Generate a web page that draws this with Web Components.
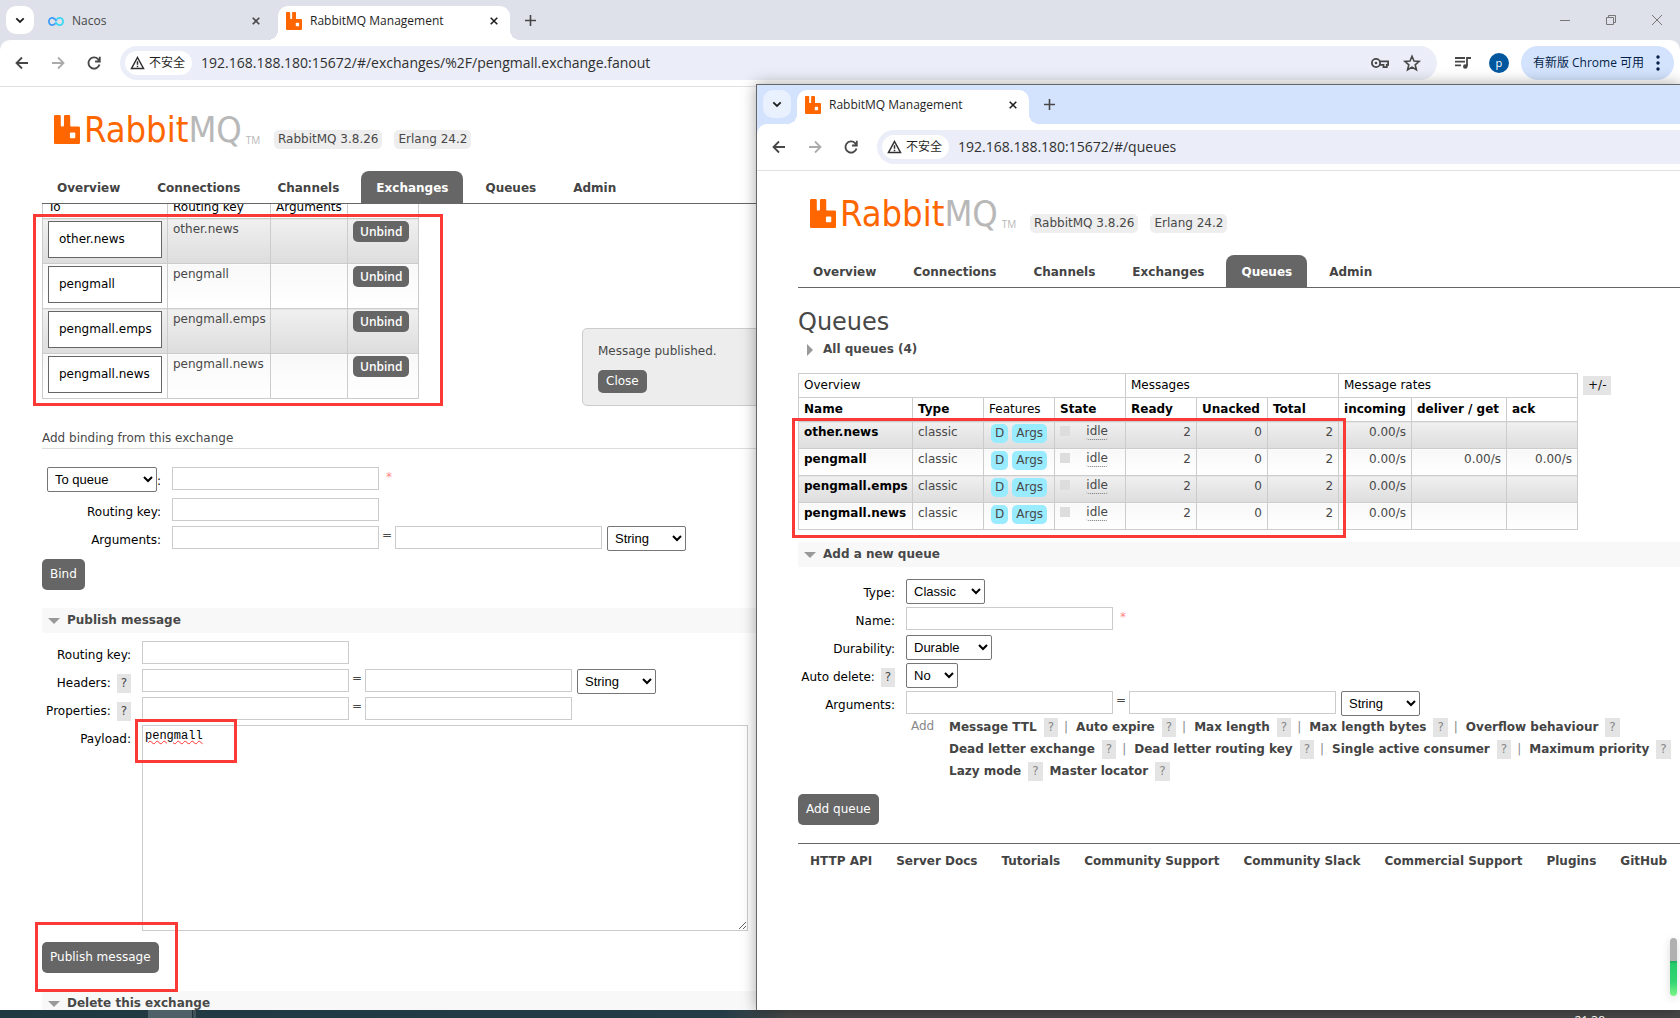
<!DOCTYPE html>
<html lang="zh-CN">
<head>
<meta charset="utf-8">
<title>RabbitMQ Management</title>
<style>
html, body { margin: 0; height: 100%; overflow: hidden; }
body { font: 12px/19px "DejaVu Sans", Verdana, sans-serif; color: #484848; background: #fff; }
</style>
</head>
<body>
<desktop-screen>
  <browser-window class="main" address="192.168.188.180:15672/#/exchanges/%2F/pengmall.exchange.fanout" actions>
    <browser-tab slot="tabs" icon="nacos">Nacos</browser-tab>
    <browser-tab slot="tabs" icon="rabbit" active>RabbitMQ Management</browser-tab>
    <rabbit-page current="Exchanges"><exchange-view></exchange-view></rabbit-page>
  </browser-window>
  <browser-window slot="front" class="front" framed address="192.168.188.180:15672/#/queues">
    <browser-tab slot="tabs" icon="rabbit" active>RabbitMQ Management</browser-tab>
    <rabbit-page current="Queues"><queues-view></queues-view></rabbit-page>
  </browser-window>
  <mark-box slot="marks" style="left:33px;top:214px;width:410px;height:192px"></mark-box>
  <mark-box slot="marks" style="left:135px;top:719px;width:102px;height:44px"></mark-box>
  <mark-box slot="marks" style="left:35px;top:922px;width:143px;height:70px"></mark-box>
  <mark-box slot="marks" style="left:792px;top:418px;width:554px;height:120px"></mark-box>
</desktop-screen>
<script>
const base = `
:host, *, *::before, *::after { box-sizing: border-box; }
:host { display: block; }
a { color: inherit; text-decoration: none; }
button { font: inherit; border: 0; padding: 0; background: none; color: inherit; }
svg { display: block; }
table { border-collapse: collapse; }
th { font-weight: normal; text-align: left; color: #000; }
th, td { border: 1px solid #ccc; }
tbody tr:nth-child(odd) td { background: linear-gradient(#f0f0f0, #ddd); }
tbody tr:nth-child(even) td { background: linear-gradient(#f8f8f8, #fff); }
.btn { background: #666; color: #fff; border-radius: 5px; padding: 6px 8px; display: block; }
.help { background: #e4e4e4; display: inline-block; padding: 0 4px; color: #484848; }
`;
function define(name, css, html) {
  customElements.define(name, class extends HTMLElement {
    constructor() {
      super();
      this.attachShadow({ mode: 'open' });
    }
    connectedCallback() {
      const t = document.createElement('template');
      t.innerHTML = `<style>${base}${css}</style>` + (typeof html === 'function' ? html(this) : html);
      this.shadowRoot.replaceChildren(t.content.cloneNode(true));
    }
  });
}

const rabbit = `<path fill="#ff6600" d="M0 1.2Q0 0 1.2 0h4.2q1.2 0 1.2 1.2v9q0 .9.9.9h1.3q.9 0 .9-.9v-9Q9.700 0 10.900 0h3.700q1.200 0 1.200 1.200v9q0 .9.9.9H24q1.300 0 1.300 1.300V27q0 1.300-1.300 1.300H1.300Q0 28.300 0 27z"/><rect x="15.500" y="17" width="5.200" height="5.600" rx="1" fill="#fff"/>`;

define('rabbit-mark', `:host { width: var(--mark-width, 16px); flex: none; } svg { width: 100%; }`,
  `<svg viewBox="0 0 25.300 28.300" aria-hidden="true">${rabbit}</svg>`);

define('nacos-mark', `:host { width: 16px; flex: none; }`,
  `<svg width="16" height="11" viewBox="0 0 18 12" fill="none" stroke-width="2" aria-hidden="true">
    <path stroke="#3b9bf8" d="M9.500 5.500C8 3 7 2 5 2a4 4 0 0 0 0 8c1.500 0 2.500-.6 3.500-2"/>
    <path stroke="#38d8f5" d="M8.500 6.500C10 9 11 10 13 10a4 4 0 0 0 0-8c-1.500 0-2.500.6-3.500 2"/></svg>`);

define('browser-tab', `
:host { flex: none; width: 232px; height: 34px; position: relative; color: #474747; font: 12px/30px "Open Sans", "Noto Sans", sans-serif; }
:host([active]) { background: #fff; color: #1f1f1f; border-radius: 10px 10px 0 0; }
:host([active])::before, :host([active])::after { content: ""; position: absolute; bottom: 0; width: 10px; height: 10px; }
:host([active])::before { left: -10px; background: radial-gradient(circle at 0 0, transparent 10px, #fff 10px); }
:host([active])::after { right: -10px; background: radial-gradient(circle at 100% 0, transparent 10px, #fff 10px); }
.in { display: flex; align-items: center; gap: 8px; padding: 0 12px 0 8px; height: 30px; }
.t { flex: 1; white-space: nowrap; }
`, el => `<div class="in"><${el.getAttribute('icon')}-mark></${el.getAttribute('icon')}-mark><span class="t"><slot></slot></span>
<button aria-label="关闭"><svg width="8" height="8" viewBox="0 0 9 9" stroke="currentColor" stroke-width="1.800"><path d="M.8.8l7.400 7.400M8.200.8L.8 8.200"/></svg></button></div>`);

define('browser-window', `
:host { display: flex; flex-direction: column; overflow: hidden; background: #fff; font-family: "Open Sans", "Noto Sans CJK SC", sans-serif; color: #474747; --strip: #dee1e9; --picker: #fff; --page-pad: 42px; }
:host([framed]) { --strip: #d3e3fd; --picker: #e9f1fe; --page-pad: 41px; }
.strip { flex: none; height: 40px; background: var(--strip); display: flex; align-items: flex-start; padding: 6px 0 0 6px; }
:host([framed]) .strip { height: 39px; padding-top: 5px; }
.picker { width: 28px; height: 28px; border-radius: 10px; background: var(--picker); display: grid; place-items: center; color: #1f1f1f; }
.tabs { display: flex; gap: 6px; padding-left: 6px; }
.new { width: 40px; height: 28px; display: grid; place-items: center; }
.ctl { margin-left: auto; display: flex; height: 28px; align-items: center; gap: 36px; padding-right: 18px; color: #777; }
.bar { flex: none; height: 46px; background: #fff; display: flex; align-items: center; padding: 0 6px 0 12px; border-radius: 10px 10px 0 0; }
.back { background: var(--strip); flex: none; border-bottom: 1px solid #dfe1e5; }
.nav { display: flex; gap: 16px; padding-right: 16px; }
.nav button { width: 20px; height: 20px; }
.box { flex: 1; height: 34px; border-radius: 17px; background: #ebeef8; display: flex; align-items: center; padding: 0 15px 0 5px; }
.chip { height: 24px; border-radius: 12px; background: #fff; display: flex; align-items: center; gap: 4px; padding: 0 7px 0 5px; font-size: 12px; line-height: 24px; color: #1f1f1f; white-space: nowrap; }
input { flex: 1; min-width: 0; border: 0; outline: 0; background: none; font: 14px/20px "Open Sans", sans-serif; color: #303030; padding: 0; margin: 0 0 0 9px; }
.icons { display: flex; gap: 12px; }
.right { display: flex; align-items: center; padding-left: 16px; }
.avatar { width: 20px; height: 20px; border-radius: 10px; background: #00579e; color: #fff; font-size: 11px; line-height: 20px; margin: 0 12px 0 16px; }
.update { height: 34px; border-radius: 17px; background: #d3e3fd; color: #041e49; font: 12px/34px "Open Sans", "Noto Sans CJK SC", sans-serif; padding: 0 14px 0 12px; display: flex; gap: 12px; align-items: center; white-space: nowrap; }
:host([framed]) .bar { padding-right: 0; border-top-right-radius: 0; }
:host([framed]) .box { border-radius: 17px 0 0 17px; }
.page { flex: 1; min-height: 0; overflow: hidden; }
`, el => `
<div class="strip">
  <button class="picker" aria-label="搜索标签页"><svg width="10" height="7" viewBox="0 0 10 7" fill="none" stroke="currentColor" stroke-width="1.800"><path d="M1.300 1.300L5 5l3.700-3.700"/></svg></button>
  <div class="tabs"><slot name="tabs"></slot></div>
  <button class="new" aria-label="新标签页"><svg width="11" height="11" viewBox="0 0 11 11" stroke="currentColor" stroke-width="1.600"><path d="M5.500 0v11M0 5.500h11"/></svg></button>
  ${el.hasAttribute('actions') ? `<div class="ctl">
    <svg width="10" height="10" stroke="currentColor"><path d="M0 5.500h10"/></svg>
    <svg width="10" height="10" fill="none" stroke="currentColor"><path d="M.5 2.500h7v7h-7zM2.500 2.500v-2h7v7h-2"/></svg>
    <svg width="10" height="10" stroke="currentColor"><path d="M0 0l10 10M10 0L0 10"/></svg></div>` : ''}
</div>
<div class="back"><div class="bar">
  <div class="nav">
    <button aria-label="返回"><svg width="20" height="20" fill="none" stroke="#474747" stroke-width="1.800"><path d="M16 10H5M10 4.500L4.500 10l5.500 5.500"/></svg></button>
    <button aria-label="前进"><svg width="20" height="20" fill="none" stroke="#ababab" stroke-width="1.800"><path d="M4 10h11M10 4.500l5.500 5.500-5.500 5.500"/></svg></button>
    <button aria-label="重新加载"><svg width="20" height="20" fill="none" stroke="#474747" stroke-width="1.800"><path d="M15.500 11.500a5.600 5.600 0 1 1-1.400-5.400L15.500 8M15.800 3.800v4.700h-4.700"/></svg></button>
  </div>
  <div class="box">
    <span class="chip"><svg width="15" height="14" viewBox="0 0 15 14" fill="none" stroke="#303030" stroke-width="1.500"><path d="M7.500 1.500l6 11h-12z"/><path d="M7.500 5.200v3.600M7.500 9.800v1.500"/></svg>不安全</span>
    <input aria-label="地址" value="${el.getAttribute('address')}">
    ${el.hasAttribute('actions') ? `<span class="icons">
      <svg width="20" height="20" fill="none" stroke="#474747" stroke-width="1.800"><circle cx="6" cy="10" r="4.100"/><circle cx="6" cy="10" r="1.300" fill="#474747" stroke="none"/><path d="M9.800 8.300h8.300v3.500h-1.300v2.300h-3.300v-2.300H9.800"/></svg>
      <svg width="20" height="20" fill="none" stroke="#474747" stroke-width="1.600"><path d="M10 3.300l2 4.700 5.100.4-3.900 3.400 1.200 5-4.400-2.700-4.400 2.700 1.200-5L2.900 8.400 8 8z"/></svg></span>` : ''}
  </div>
  ${el.hasAttribute('actions') ? `<div class="right">
    <svg width="20" height="20" fill="none" stroke="#474747" stroke-width="1.800"><path d="M2 5h10M2 8.700h10M2 12.400h6M14 13V5h4"/><circle cx="12.300" cy="13.500" r="2.300" fill="#474747" stroke="none"/></svg>
    <button class="avatar">p</button>
    <button class="update">有新版 Chrome 可用<svg width="4" height="16" fill="#041e49"><circle cx="2" cy="2" r="1.700"/><circle cx="2" cy="8" r="1.700"/><circle cx="2" cy="14" r="1.700"/></svg></button></div>` : ''}
</div></div>
<div class="page"><slot></slot></div>`);

define('rabbit-logo', `
:host { display: flex; align-items: flex-end; --mark-width: 26px; }
.w { font: 36px/30px "DejaVu Sans Condensed", "Liberation Sans Narrow", sans-serif; color: #f60; margin-left: 4px; height: 29px; }
.w b { font-weight: normal; color: #b8b8b8; }
.tm { font: 10px/10px "Open Sans", sans-serif; color: #b8b8b8; margin-left: 4px; height: 9px; }
`, `<rabbit-mark></rabbit-mark><span class="w">Rabbit<b>MQ</b></span><span class="tm">TM</span>`);

define('rabbit-page', `
:host { display: flex; flex-direction: column; height: 100%; padding-left: var(--page-pad); font: 12px/19px "DejaVu Sans", Verdana, sans-serif; color: #484848; }
.head { flex: none; display: flex; padding: 28px 0 21px 12px; align-items: flex-start; height: 84px; }
rabbit-logo { width: 204px; height: 29px; }
.v { margin-top: 15px; margin-left: 12px; background: #eee; border-radius: 5px; padding: 0 4px; }
.v:first-of-type { margin-left: 16px; }
nav { flex: none; display: flex; gap: 7px; border-bottom: 1px solid #666; height: 33px; }
nav a { font-weight: bold; padding: 0 15px; line-height: 34px; height: 32px; border-radius: 8px 8px 0 0; color: #444; }
nav a.on { background: #666; color: #fff; }
.body { flex: 1; min-height: 0; overflow: hidden; }
`, el => `<div class="head"><rabbit-logo></rabbit-logo><span class="v">RabbitMQ 3.8.26</span><span class="v">Erlang 24.2</span></div>
<nav>${['Overview','Connections','Channels','Exchanges','Queues','Admin'].map(n => `<a href="#"${n === el.getAttribute('current') ? ' class="on"' : ''}>${n}</a>`).join('')}</nav>
<div class="body"><slot></slot></div>`);

define('section-title', `
:host { height: 25px; background: #f8f8f8; }
:host([closed]) { background: none; }
button { display: flex; align-items: center; font-weight: bold; line-height: 25px; }
i { width: 24px; height: 25px; margin-right: 1px; display: grid; place-items: center; }
i::before { content: ""; display: block; width: 0; height: 0; border: 6px solid transparent; border-bottom: 0; border-top-color: #999; }
:host([closed]) i::before { border: 6px solid transparent; border-right: 0; border-left-color: #999; }
`, `<button><i></i><slot></slot></button>`);

/* One labelled line of a form: kind is text, pair, select or area. */
define('form-line', `
:host { display: flex; align-items: flex-start; height: 28px; font: inherit; }
:host([kind="area"]) { height: auto; }
.l { width: var(--label, 89px); text-align: right; color: #000; line-height: 28px; white-space: nowrap; margin-right: 11px; }
.l .help { line-height: 19px; margin-left: 2px; }
input, textarea { border: 1px solid #ccc; margin: 0; padding: 2px; outline: 0; background: #fff; }
input { width: 207px; height: 23px; }
textarea { width: 606px; height: 206px; font: 12px/16px "Liberation Mono", monospace; color: #000; text-decoration: underline wavy #f33 1px; }
select { height: 25px; font: 13px "Liberation Sans", Arial, sans-serif; background: #fff; border: 1px solid #767676; border-radius: 2px; padding: 0 3px; margin: 0; color: #000; }
.l select { vertical-align: top; }
.eq { width: 16px; text-align: center; }
.pick { margin-left: 5px; width: 79px; }
.req { color: #f88; margin-left: 7px; line-height: 20px; }
`, el => {
  const kind = el.getAttribute('kind') || 'text', label = el.getAttribute('label'), opt = el.getAttribute('option');
  const sel = (cls = '', w = '') => `<select id="${kind === 'select' ? 'f' : 's'}" aria-label="${opt}" class="${cls}"${w ? ` style="width:${w}px"` : ''}><option>${opt}</option></select>`;
  const help = el.hasAttribute('help') ? ' <span class="help">?</span>' : '';
  const lab = label ? `<label class="l" for="f">${label}:${help}</label>` : `<label class="l" for="f">${sel('', 110)}:</label>`;
  let f = '<input id="f">';
  if (kind === 'pair') f += `<span class="eq">=</span><input aria-label="value">${opt ? sel('pick') : ''}`;
  if (kind === 'select') f = sel('', el.getAttribute('width'));
  if (kind === 'area') f = `<textarea id="f">${el.getAttribute('value')}</textarea>`;
  return lab + f + (el.hasAttribute('required') ? '<span class="req">*</span>' : '');
});

define('exchange-view', `
:host { position: relative; height: 100%; }
.bind { margin-top: -10px; table-layout: fixed; width: 377px; }
.bind th { height: 24px; padding: 2px 5px 0; }
.bind td { height: 45px; padding: 2px 5px 0; vertical-align: top; line-height: 17px; }
.ex { display: block; border: 1px solid #666; background: #fff; color: #000; line-height: 35px; padding: 0 10px; }
.bind .btn { padding: 1px 7px; font: 600 12px/19px "Open Sans", sans-serif; }
.sub { margin: 29px 0 18px; border-bottom: 1px solid #ddd; line-height: 20px; }
.first { --label: 119px; }
.first :first-child { margin-bottom: 3px; }
.first .btn { margin: 5px 0 18px; }
.pub { padding-top: 8px; }
.pub .btn { margin: 11px 0 18px; }
.note { position: absolute; left: 540px; top: 124px; width: 340px; height: 78px; border: 1px solid #ccc; border-radius: 5px; background: #ededed; padding: 13px 15px; display: flex; flex-direction: column; align-items: flex-start; gap: 9px; }
.note .btn { padding: 2px 8px; }
.pane { display: flow-root; }
`, () => `
<div class="pane">
<table class="bind"><colgroup><col style="width:125px"><col style="width:103px"><col style="width:77px"><col style="width:71px"></colgroup><thead><tr><th>To</th><th>Routing key</th><th>Arguments</th><th></th></tr></thead><tbody>
${['other.news','pengmall','pengmall.emps','pengmall.news'].map(q => `<tr><td><a class="ex" href="#">${q}</a></td><td>${q}</td><td></td><td><button class="btn">Unbind</button></td></tr>`).join('')}
</tbody></table>
<div class="sub">Add binding from this exchange</div>
<div class="first">
  <form-line option="To queue" required></form-line>
  <form-line label="Routing key"></form-line>
  <form-line label="Arguments" kind="pair" option="String"></form-line>
  <button class="btn">Bind</button>
</div>
<section-title>Publish message</section-title>
<div class="pub">
  <form-line label="Routing key"></form-line>
  <form-line label="Headers" help kind="pair" option="String"></form-line>
  <form-line label="Properties" help kind="pair"></form-line>
  <form-line label="Payload" kind="area" value="pengmall"></form-line>
  <button class="btn">Publish message</button>
</div>
<section-title>Delete this exchange</section-title>
</div>
<div class="note"><span>Message published.</span><button class="btn">Close</button></div>`);

const queueRows = [['other.news', '', ''], ['pengmall', '0.00/s', '0.00/s'], ['pengmall.emps', '', ''], ['pengmall.news', '', '']];
define('queue-table', `
:host { display: flex; align-items: flex-start; gap: 5px; }
table { table-layout: fixed; width: 780px; }
th { height: 24px; padding: 0 5px; }
td { height: 27px; padding: 1px 5px 0; vertical-align: top; }
th b, td b { color: #000; }
.r { text-align: right; }
.tag { background: #99ebff; border-radius: 5px; padding: 0 4px; margin-left: 3px; display: inline-block; }
.tag + .tag { margin-left: 4px; }
.f { padding: 2px 3px 0 4px; white-space: nowrap; }
.st { display: flex; justify-content: space-between; align-items: center; padding-right: 12px; }
.st i { width: 10px; height: 10px; background: #ddd; margin-bottom: 1px; }
.st abbr { border-bottom: 1px dotted #777; border-radius: 3px; line-height: 17px; height: 17px; text-decoration: none; }
.cols { background: #e4e4e4; color: #111; padding: 0 5px; margin-top: 3px; }
`, () => `<table><colgroup><col style="width:114px"><col style="width:71px"><col style="width:71px"><col style="width:71px"><col style="width:71px"><col style="width:71px"><col style="width:71px"><col style="width:73px"><col style="width:95px"><col style="width:71px"></colgroup>
<thead><tr><th colspan="4">Overview</th><th colspan="3">Messages</th><th colspan="3">Message rates</th></tr>
<tr><th><b>Name</b></th><th><b>Type</b></th><th>Features</th><th><b>State</b></th><th><b>Ready</b></th><th><b>Unacked</b></th><th><b>Total</b></th><th><b>incoming</b></th><th><b>deliver / get</b></th><th><b>ack</b></th></tr></thead>
<tbody>${queueRows.map(([n, d, a]) => `<tr><td><a href="#"><b>${n}</b></a></td><td>classic</td><td class="f"><span class="tag">D</span><span class="tag">Args</span></td><td><div class="st"><i></i><abbr>idle</abbr></div></td><td class="r">2</td><td class="r">0</td><td class="r">2</td><td class="r">0.00/s</td><td class="r">${d}</td><td class="r">${a}</td></tr>`).join('')}</tbody></table>
<button class="cols">+/-</button>`);

define('argument-links', `
:host { display: flex; color: #888; padding-left: 113px; }
.add { width: 38px; line-height: 16px; }
.rows { display: flex; flex-direction: column; gap: 3px; }
.rows div { display: flex; gap: 7px; white-space: nowrap; }
a { font-weight: bold; color: #444; }
.help { color: #888; }
.bar { margin: 0 1px 0 -1px; }
`, () => {
  const row = (list, sep) => `<div>${list.map(t => `<a href="#">${t}</a><span class="help">?</span>`).join(sep)}</div>`;
  const bar = '<span class="bar">|</span>';
  return `<span class="add">Add</span><div class="rows">${row(['Message TTL','Auto expire','Max length','Max length bytes','Overflow behaviour'], bar)}
${row(['Dead letter exchange','Dead letter routing key','Single active consumer','Maximum priority'], bar)}
${row(['Lazy mode','Master locator'], '')}</div>`;
});

define('queues-view', `
h1 { font: 24px/30px "DejaVu Sans", Verdana, sans-serif; margin: 0; padding-top: 19px; }
queue-table { margin: 11px 0 12px; }
.form { padding-top: 12px; }
form-line { --label: 97px; }
.btn { margin: 13px 0 18px; }
footer { border-top: 1px solid #666; padding-top: 8px; display: flex; gap: 24px; padding-left: 12px; white-space: nowrap; font-weight: bold; color: #444; }
argument-links { margin-top: -1px; }
`, () => `<h1>Queues</h1>
<section-title closed>All queues (4)</section-title>
<queue-table></queue-table>
<section-title>Add a new queue</section-title>
<div class="form">
  <form-line label="Type" kind="select" option="Classic" width="79"></form-line>
  <form-line label="Name" required></form-line>
  <form-line label="Durability" kind="select" option="Durable" width="86"></form-line>
  <form-line label="Auto delete" help kind="select" option="No" width="52"></form-line>
  <form-line label="Arguments" kind="pair" option="String"></form-line>
</div>
<argument-links></argument-links>
<button class="btn">Add queue</button>
<footer>${['HTTP API','Server Docs','Tutorials','Community Support','Community Slack','Commercial Support','Plugins','GitHub'].map(t => `<a href="#">${t}</a>`).join('')}</footer>`);

define('mark-box', `:host { position: absolute; border: 3px solid #fb3937; }`, '');

define('task-bar', `
:host { height: 8px; overflow: hidden; display: flex; justify-content: space-between; padding: 0 75px 0 148px; background: linear-gradient(90deg, #203840, #243c46 43%, #484848 47%); }
i { width: 48px; background: linear-gradient(90deg, #4e6168 44px, #1e3038 44px, #1e3038 45px, #3e525a 45px); }
span { font: 12px/16px "Open Sans", sans-serif; color: #fff; padding-top: 3px; }
`, `<i></i><span>21:38</span>`);

define('desktop-screen', `
:host { display: flex; flex-direction: column; height: 100vh; position: relative; overflow: hidden; }
::slotted(.main) { flex: 1; min-height: 0; }
::slotted(.front) { position: absolute; left: 45%; top: 84px; right: 0; bottom: 8px; border: solid #666; border-width: 1px 0 0 1px; box-shadow: 0 0 14px rgba(0, 0, 0, .35); }
.meter { position: absolute; right: 3px; bottom: 22px; width: 7px; height: 58px; border-radius: 4px; background: linear-gradient(#b0b0b0 23px, #1aa85a 23px, #25cc6c 26px, #32d574 44px, #7df58b); box-shadow: 0 2px 8px rgba(0, 0, 0, .15); }
task-bar { flex: none; position: relative; }
`, `<slot></slot><task-bar></task-bar><slot name="front"></slot><div class="meter"></div><slot name="marks"></slot>`);
</script>
</body>
</html>
